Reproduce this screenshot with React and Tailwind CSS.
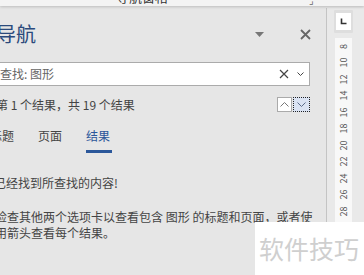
import React from "react";

const marks = ["8", "10", "12", "14", "16", "18", "20", "22", "24", "26", "28"];

const Ruler = () => (
  <div className="w-[38px] h-full bg-[#e9e9e9] border-l border-[#c4c4c4] flex flex-col items-center pl-[7px] pr-[12px]">
    <div className="mt-[2px] w-[19px] h-[23px] bg-[#dedede] flex items-center justify-center rounded-[1px]">
      <div className="w-[15px] h-[17px] bg-white flex items-center justify-center">
        <svg width="7" height="7" viewBox="0 0 7 7">
          <path d="M1.5 0.5 V5.5 H6.5" stroke="#333" strokeWidth="1.6" fill="none" />
        </svg>
      </div>
    </div>
    <div className="mt-[6px] w-[17px] flex-1 bg-[#f8f8f8] flex flex-col items-center -translate-y-[1px]">
      {marks.map((m) => (
        <div key={m} className="h-[16.5px] flex items-center justify-center">
          <span className="-rotate-90 text-[9px] leading-none text-[#555]">{m}</span>
        </div>
      ))}
    </div>
  </div>
);

const App = () => {
  return (
    <div
      className="relative w-[364px] h-[275px] overflow-hidden bg-[#e6e6e6] flex flex-col"
      style={{ fontFamily: '"Noto Sans CJK SC", "Liberation Sans", sans-serif' }}
    >
      <div className="h-[6px] bg-[#f3f3f3] shadow-[0_1px_3px_rgba(0,0,0,0.18)] relative z-10 flex items-start overflow-hidden">
        <span className="ml-[116px] text-[13px] leading-[13px] text-[#333] -translate-y-[10px]">导航窗格</span>
        <span className="ml-auto mr-[50px] text-[10px] leading-none text-[#666] -translate-y-[5px]">⌟</span>
      </div>
      <div className="flex flex-1 pt-[2px]">
        <div className="flex-1 flex flex-col -ml-[4px] text-[#444]">
          <div className="h-[30px] mt-[11px] flex items-center">
            <span className="text-[20px] leading-none text-[#2b4a7c]">导航</span>
            <svg className="ml-auto mr-[36px]" width="9" height="5" viewBox="0 0 9 5">
              <path d="M0 0 H9 L4.5 5 Z" fill="#777" />
            </svg>
            <svg className="mr-[15px]" width="11" height="11" viewBox="0 0 11 11">
              <path d="M1 1 L10 10 M10 1 L1 10" stroke="#666" strokeWidth="1.8" />
            </svg>
          </div>
          <div className="mt-[13px] mr-[16px] h-[24px] bg-white border border-[#ababab] flex items-center">
            <span className="ml-[3px] text-[12px] text-[#666]">查找: 图形</span>
            <svg className="ml-auto" width="10" height="10" viewBox="0 0 10 10">
              <path d="M1 1 L9 9 M9 1 L1 9" stroke="#444" strokeWidth="1.2" />
            </svg>
            <svg className="ml-[8px] mr-[5px]" width="7" height="4" viewBox="0 0 7 4">
              <path d="M0.5 0.5 L3.5 3.5 L6.5 0.5" stroke="#444" strokeWidth="1" fill="none" />
            </svg>
          </div>
          <div className="mt-[11px] h-[15px] flex items-center">
            <span className="text-[12px] leading-none">第 1 个结果，共 19 个结果</span>
            <div className="ml-auto mr-[16px] flex">
              <div className="w-[15px] h-[15px] bg-white border border-[#aaa] flex items-center justify-center">
                <svg width="9" height="5" viewBox="0 0 9 5">
                  <path d="M0.5 4.5 L4.5 0.5 L8.5 4.5" stroke="#777" strokeWidth="1" fill="none" />
                </svg>
              </div>
              <div className="ml-[1px] w-[17px] h-[15px] bg-[#dae3f3] border border-dotted border-[#222] flex items-center justify-center">
                <svg width="9" height="5" viewBox="0 0 9 5">
                  <path d="M0.5 0.5 L4.5 4.5 L8.5 0.5" stroke="#5a6b8a" strokeWidth="1" fill="none" />
                </svg>
              </div>
            </div>
          </div>
          <div className="mt-[18px] flex text-[12px] leading-none">
            <div className="w-[48px] -ml-[6px]">标题</div>
            <div className="w-[48px]">页面</div>
            <div className="flex flex-col items-start">
              <span className="text-[#2b579a]">结果</span>
              <div className="mt-[8px] w-[26px] h-[3px] bg-[#2b579a]"></div>
            </div>
          </div>
          <div className="mt-[24px] text-[12px] leading-none -ml-[2px]">已经找到所查找的内容!</div>
          <div className="mt-[20px] text-[12px] leading-[16px] -ml-[1px] whitespace-nowrap">
            检查其他两个选项卡以查看包含 图形 的标题和页面，或者使
            <br />
            用箭头查看每个结果。
          </div>
        </div>
        <Ruler />
      </div>
      <div className="absolute left-[255px] top-[222px] w-[109px] h-[53px] bg-white z-20 flex items-center pl-[4px]">
        <span className="text-[25px] leading-none text-[#cfcfcf]">软件技巧</span>
      </div>
    </div>
  );
};

export default App;
